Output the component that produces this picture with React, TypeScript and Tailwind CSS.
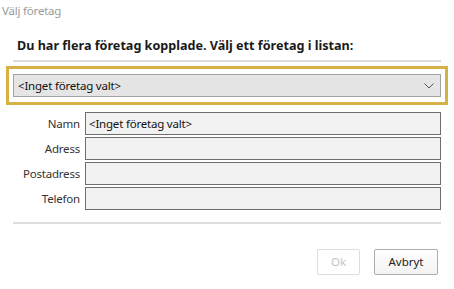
import React from "react";

const font = { fontFamily: '"Noto Sans", "Open Sans", sans-serif' };

function Field({ label, value }: { label: string; value?: string }) {
  return (
    <div className="flex items-center h-[23px]">
      <div className="w-[80px] text-right pr-[5px] text-[11.5px] tracking-[-0.2px] text-[#333]">{label}</div>
      <div className="flex-1 h-[23px] border border-[#6e6e6e] bg-[#f2f2f2] flex items-center pl-[3px] text-[11.5px] tracking-[-0.2px] text-[#111] leading-none">
        {value}
      </div>
    </div>
  );
}

export default function App() {
  return (
    <div className="w-[454px] h-[289px] bg-white relative overflow-hidden" style={font}>
      <div className="pl-[2px] pt-[3px] text-[11.5px] tracking-[-0.2px] leading-[16px] text-[#9a9a9a]">Välj företag</div>
      <div className="pl-[17px] pt-[18px] text-[12.6px] leading-[17px] font-bold text-[#1a1a1a]">
        Du har flera företag kopplade. Välj ett företag i listan:
      </div>
      <div className="ml-[13px] mr-[13px] mt-[6px] h-[2px] bg-[#dcdcdc]" />
      <div className="ml-[6px] mr-[6px] mt-[4px] border-[3px] border-[#d8b146] px-[4px] py-[5px]">
        <div className="h-[23px] bg-[#e5e5e5] border border-[#a3a3a3] flex items-center justify-between pl-[4px] pr-[6px]">
          <span className="text-[11.5px] tracking-[-0.2px] text-[#111] leading-none">&lt;Inget företag valt&gt;</span>
          <svg width="10" height="6" viewBox="0 0 10 6" fill="none">
            <path d="M0.5 0.5 L5 5 L9.5 0.5" stroke="#555" strokeWidth="1" />
          </svg>
        </div>
      </div>
      <div className="mt-[7px] ml-[5px] mr-[13px] flex flex-col gap-[2px]">
        <Field label="Namn" value="<Inget företag valt>" />
        <Field label="Adress" />
        <Field label="Postadress" />
        <Field label="Telefon" />
      </div>
      <div className="ml-[13px] mr-[13px] mt-[12px] h-[2px] bg-[#dcdcdc]" />
      <div className="flex justify-end gap-[14px] mr-[16px] mt-[25px]">
        <button className="w-[43px] h-[26px] border border-[#dedede] rounded-[2px] bg-white text-[11.5px] text-[#c4c4c4]">Ok</button>
        <button className="w-[64px] h-[26px] border border-[#adadad] rounded-[2px] bg-gradient-to-b from-white to-[#f3f3f3] text-[11.5px] text-[#222]">Avbryt</button>
      </div>
    </div>
  );
}
